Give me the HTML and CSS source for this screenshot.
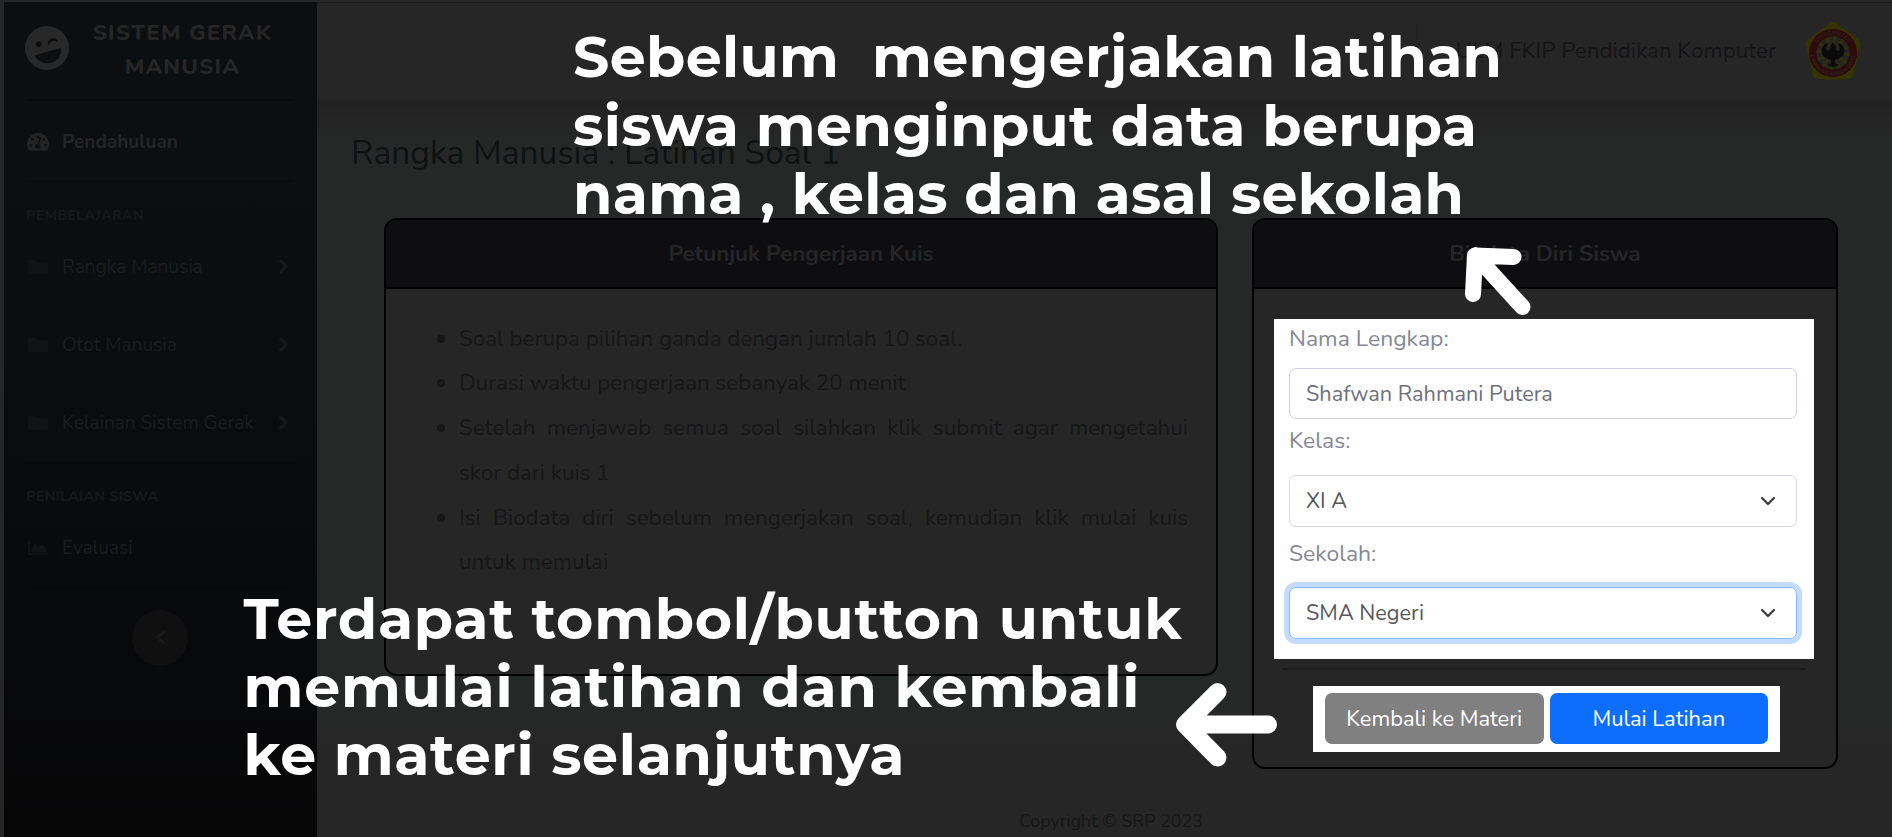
FILE: index.html
```html
<!DOCTYPE html>
<html lang="id">
<head>
<meta charset="utf-8">
<title>Sistem Gerak Manusia</title>
<link rel="stylesheet" href="styles.css">
</head>
<body>
<div class="app">
  <aside class="sidebar">
    <div class="brand">
      <svg class="brand-icon" viewBox="0 0 44 44"><path fill-rule="evenodd" d="M22 0a22 22 0 1 0 0 44 22 22 0 0 0 0-44zM13.700 15.200a2.900 2.900 0 1 1 0 5.800 2.900 2.900 0 0 1 0-5.800zM23 18.500c-1-3.500 2-6.500 5.500-6.500 2.500 0 4 1.500 4.500 3 .3 1.200-.8 1.500-1.600.8-2-1.600-5-1.200-6.500 1.600-.5 1.200-1.500 1.600-1.900 1.100zM11 29l23.500-6.700c.8-.2 1.700.2 1.700 1 .4 7-4.800 13.700-12.700 14-6.500.2-11.700-2.800-13.300-7-.2-.6.200-1.100.8-1.300z"/></svg>
      <div class="brand-text"><span>SISTEM GERAK</span><br><span>MANUSIA</span></div>
    </div>
    <hr class="rule">
    <a class="nav nav-home"><svg class="ico" viewBox="0 0 22 18"><path fill-rule="evenodd" d="M11 0A11 11 0 0 0 1.400 16.400c.4.700 1 1.100 1.700 1.100h15.800c.7 0 1.300-.4 1.700-1.100A11 11 0 0 0 11 0zM10 2.800h2.400v2.200H10zM4.200 5.200h2.400v2.200H4.200zM2.500 11h2.400v2.200H2.500zM17.200 11h2.400v2.200h-2.400zM15.800 5.400h2v2h-2zM14.200 4.100l-1.900 7.200a2.600 2.600 0 0 1 .8 4H8.700a2.600 2.600 0 0 1 2.200-4.500L12.700 3.800z"/></svg><span>Pendahuluan</span></a>
    <hr class="rule">
    <div class="heading">PEMBELAJARAN</div>
    <a class="nav"><svg class="ico" viewBox="0 0 22 18"><path d="M3 2h5.500l2 2.200H19a2 2 0 0 1 2 2V14a2 2 0 0 1-2 2H3a2 2 0 0 1-2-2V4a2 2 0 0 1 2-2z"/></svg><span>Rangka Manusia</span><svg class="chev" viewBox="0 0 10 16"><path d="M2 2l6 6-6 6"/></svg></a>
    <a class="nav"><svg class="ico" viewBox="0 0 22 18"><path d="M3 2h5.500l2 2.200H19a2 2 0 0 1 2 2V14a2 2 0 0 1-2 2H3a2 2 0 0 1-2-2V4a2 2 0 0 1 2-2z"/></svg><span>Otot Manusia</span><svg class="chev" viewBox="0 0 10 16"><path d="M2 2l6 6-6 6"/></svg></a>
    <a class="nav"><svg class="ico" viewBox="0 0 22 18"><path d="M3 2h5.500l2 2.200H19a2 2 0 0 1 2 2V14a2 2 0 0 1-2 2H3a2 2 0 0 1-2-2V4a2 2 0 0 1 2-2z"/></svg><span>Kelainan Sistem Gerak</span><svg class="chev" viewBox="0 0 10 16"><path d="M2 2l6 6-6 6"/></svg></a>
    <hr class="rule rule-faint">
    <div class="heading">PENILAIAN SISWA</div>
    <a class="nav nav-eval"><svg class="ico" viewBox="0 0 22 18"><path d="M1 2h2v12h18v2H2a1 1 0 0 1-1-1zM4.500 13V9.500L8.500 4l3 4 3.500-3 3 4 2 4z"/></svg><span>Evaluasi</span></a>
    <hr class="rule rule-faint">
    <div class="toggler"><svg class="chev chev-left" viewBox="0 0 10 16"><path d="M8 2L2 8l6 6"/></svg></div>
  </aside>

  <main class="main">
    <header class="topbar">
      <div class="divider"></div>
      <span class="user">ULM FKIP Pendidikan Komputer</span>
      <svg class="logo" viewBox="0 0 56 58">
        <path class="logo-y" d="M28 0q2 0 4 2L54 18q2 2 1.500 5L48 54q-1 2-3 2.500-17 2.500-34 0-2-.5-3-2.500L.5 23Q0 20 2 18L24 2q2-2 4-2z"/>
        <circle class="logo-r" cx="28" cy="31" r="24"/>
        <circle class="logo-w" cx="28" cy="31" r="16.500"/>
        <circle class="logo-rays" cx="28" cy="31" r="11.500"/>
        <path class="logo-b" d="M28 20l2.500 4 .5 4 3 1 1-3-2-5c6 1 8 8 5 13l-5 3-3 1v3l4 2-6 2-6-2 4-2v-3l-3-1-5-3c-3-5-1-12 5-13l-2 5 1 3 3-1 .5-4z"/>
        <path id="ringTop" fill="none" d="M9.500 31a18.500 18.500 0 0 1 37 0"/>
        <path id="ringBot" fill="none" d="M5.500 31a22.500 22.500 0 0 0 45 0"/>
        <text class="logo-t"><textPath href="#ringTop" startOffset="50%" text-anchor="middle">UNIVERSITAS</textPath></text>
        <text class="logo-t"><textPath href="#ringBot" startOffset="50%" text-anchor="middle">LAMBUNG MANGKURAT</textPath></text>
      </svg>
    </header>

    <section class="content">
      <h1 class="title">Rangka Manusia : Latihan Soal 1</h1>
      <div class="cards">
        <article class="card card-guide">
          <h2 class="card-head">Petunjuk Pengerjaan Kuis</h2>
          <ul class="guide">
            <li>Soal berupa pilihan ganda dengan jumlah 10 soal.</li>
            <li>Durasi waktu pengerjaan sebanyak 20 menit</li>
            <li>Setelah menjawab semua soal silahkan klik submit agar mengetahui skor dari kuis 1</li>
            <li>Isi Biodata diri sebelum mengerjakan soal, kemudian klik mulai kuis untuk memulai</li>
          </ul>
        </article>
        <article class="card card-bio">
          <h2 class="card-head">Biodata Diri Siswa</h2>
          <form class="form">
            <label class="label label-name">Nama Lengkap:</label>
            <div class="field field-name">Shafwan Rahmani Putera</div>
            <label class="label label-class">Kelas:</label>
            <div class="field field-select">XI A<svg class="caret" viewBox="0 0 16 10"><path d="M2 2l6 6 6-6"/></svg></div>
            <label class="label label-school">Sekolah:</label>
            <div class="field field-select field-focus">SMA Negeri<svg class="caret" viewBox="0 0 16 10"><path d="M2 2l6 6 6-6"/></svg></div>
          </form>
          <hr class="card-rule">
          <div class="actions">
            <span class="btn btn-back">Kembali ke Materi</span>
            <span class="btn btn-start">Mulai Latihan</span>
          </div>
        </article>
      </div>
    </section>
    <footer class="footer">Copyright © SRP 2023</footer>
  </main>
</div>

<svg class="notes" viewBox="0 0 1892 837">
  <g class="note-text">
    <text x="573" y="77" textLength="929">Sebelum&#160; mengerjakan latihan</text>
    <text x="573" y="145.500" textLength="904">siswa menginput data berupa</text>
    <text x="573" y="214" textLength="891">nama , kelas dan asal sekolah</text>
    <text x="243.500" y="638.500" textLength="938">Terdapat tombol/button untuk</text>
    <text x="243.500" y="706.500" textLength="896">memulai latihan dan kembali</text>
    <text x="243.500" y="775" textLength="661">ke materi selanjutnya</text>
  </g>
  <path class="arrow arrow-up" d="M1513.500 257L1475 255.500L1473 294M1475.500 255.500L1522.500 307"/>
  <path class="arrow" d="M1217.500 692L1185 724.500L1217.500 757.500M1186 724.500H1268"/>
</svg>
</body>
</html>
```
FILE: styles.css
```css
* { box-sizing: border-box; }
body {
  margin: 0;
  width: 1892px;
  height: 837px;
  overflow: hidden;
  background: #262626;
  font-family: Nunito, Lato, sans-serif;
  font-size: 22.400px;
}
h1, h2, ul, hr { margin: 0; padding: 0; border: 0; }

.app { display: flex; height: 837px; padding: 2px 0 0 4px; }

.sidebar {
  flex: none;
  width: 313px;
  padding: 0 23px 0 22px;
  background: linear-gradient(#0d0e10, #0c0e10 20%, #0a0b0d 60%, #070708);
  color: #252525;
}
.brand { display: flex; height: 97px; padding-top: 14px; align-items: flex-start; }
.brand-icon { width: 44px; height: 44px; margin: 10px 0 0 -1px; fill: #282828; }
.brand-text {
  flex: 1;
  padding-left: 1px;
  margin-right: -1px;
  text-align: center;
  font-weight: 800;
  font-size: 22.400px;
  line-height: 33.600px;
  letter-spacing: 1.120px;
}
.rule { height: 2px; background: #0a0b0c; }
.rule-faint { background: #09090a; }
.heading { height: 45px; padding-top: 22.500px; font-size: 14.560px; line-height: 20px; font-weight: 800; color: #161718; }
.nav { display: flex; align-items: center; height: 78.200px; padding-top: 1px; font-size: 19.040px; color: #1b1c1d; }
.nav .ico { width: 22px; height: 18px; margin: 0 13px 0 1px; fill: #121314; }
.nav span { flex: 1; white-space: nowrap; }
.nav-home { height: 79px; padding-top: 3px; font-weight: 700; color: #242425; }
.nav-home .ico { fill: #232324; }
.nav-eval { height: 78px; }
.chev { width: 9px; height: 15px; margin-right: 6px; fill: none; stroke: #171819; stroke-width: 3.600; stroke-linecap: round; stroke-linejoin: round; }
.toggler { display: flex; align-items: center; justify-content: center; width: 56px; height: 56px; margin: 21px auto 0; border-radius: 50%; background: #101011; }
.chev-left { margin: 0; }

.main { flex: 1; display: flex; flex-direction: column; background: #262827; }
.topbar {
  display: flex;
  align-items: center;
  justify-content: flex-end;
  height: 98px;
  padding: 0 30px 1px 0;
  background: #262626;
  border-top: 1px solid #1e1e1e;
}
.divider { width: 1px; height: 55px; margin-right: 39px; background: #232323; }
.user { padding-bottom: 2px; color: #151517; }
.logo { width: 58px; height: 58px; margin-left: 28px; }
.logo-y { fill: #353303; }
.logo-r { fill: #2f0a0a; }
.logo-w { fill: #242424; }
.logo-rays { fill: none; stroke: #302f0c; stroke-width: 10; stroke-dasharray: 2.500 3.500; }
.logo-b { fill: #0a0a0a; }
.logo-t { font-family: "Liberation Sans", sans-serif; font-size: 5.500px; font-weight: 700; fill: #2b2020; }

.content {
  flex: 1;
  padding: 29px 54px 0 34px;
  background: linear-gradient(#222222, #242524 24px, #262827 46px, #262827 610px, #262626 650px);
}
.title { font-size: 33.600px; line-height: 48px; font-weight: 400; color: #101112; }
.cards { display: grid; grid-template-columns: 834px 586px; gap: 34px; margin: 41px 0 0 33px; align-items: start; }
.card { border: 2px solid #000; border-radius: 13px; background: #262626; overflow: hidden; }
.card-guide { height: 458px; }
.card-bio { height: 551px; }
.card-head {
  height: 69px;
  border-bottom: 2px solid #000;
  background: #0e0e10;
  color: #252525;
  font-size: 22.400px;
  line-height: 67px;
  font-weight: 700;
  text-align: center;
}
.guide { padding: 27.500px 28px 0 73px; line-height: 44.800px; color: #171718; text-align: justify; }

.form { width: 539.500px; height: 340px; margin: 30px 0 0 20px; padding: 4px 16.500px 0 15px; background: #fff; }
.label { display: block; line-height: 32px; font-size: 22.900px; color: #858796; }
.field {
  display: flex;
  align-items: center;
  justify-content: space-between;
  height: 51px;
  padding: 0 20px 0 16px;
  border: 1px solid #d1d3e2;
  border-radius: 7px;
  font-size: 21.700px;
  color: #6e707e;
}
.field-name { margin-top: 13px; }
.label-class { margin-top: 6px; }
.field-select { height: 52px; margin-top: 18px; border-color: #d5d7df; color: #55585e; }
.label-school { margin-top: 11px; }
.field-focus { margin-top: 17px; border-color: #86b7fe; box-shadow: 0 0 0 5px #c2dbfe; }
.caret { width: 16px; height: 10px; fill: none; stroke: #343a40; stroke-width: 2.200; stroke-linecap: round; stroke-linejoin: round; }
.card-rule { height: 2px; margin: 9px 30px 0 28px; background: #1e1e1e; }
.actions { display: flex; gap: 6px; width: 467px; height: 66px; margin: 16px 0 0 59px; padding: 7px 12px 0; background: #fff; }
.btn { flex: 1; height: 51px; border-radius: 7px; color: #fff; font-size: 21.900px; line-height: 52px; text-align: center; }
.btn-back { background: #808080; }
.btn-start { background: #0d6efd; }

.footer { height: 52px; background: #262626; color: #171718; font-size: 17.920px; line-height: 72px; text-align: center; padding-left: 13px; }

.notes { position: absolute; left: 0; top: 0; width: 1892px; height: 837px; }
.note-text { font: 700 57px Montserrat, Inter, sans-serif; fill: #fff; }
.note-text text { white-space: pre; }
.arrow { fill: none; stroke: #fff; stroke-width: 18; stroke-linecap: round; stroke-linejoin: round; }
.arrow-up { stroke-width: 16; }
```
